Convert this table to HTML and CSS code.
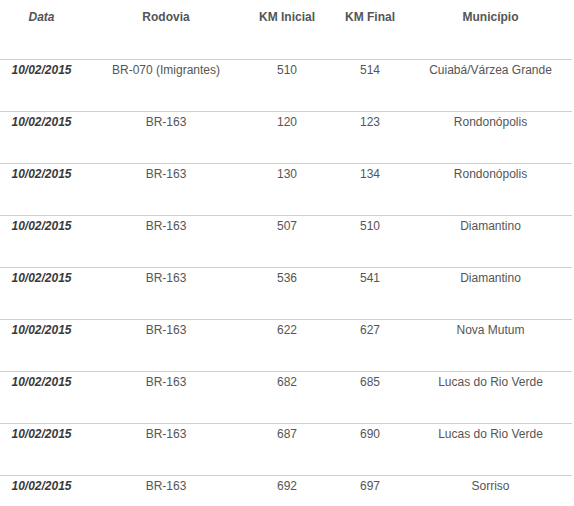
FILE: index.html
```html
<!DOCTYPE html>
<html lang="pt">
<head>
<meta charset="utf-8">
<title>Rodovias</title>
<link rel="stylesheet" href="styles.css">
</head>
<body>
<table class="roads">
  <colgroup>
    <col class="c-data"><col class="c-rod"><col class="c-ini"><col class="c-fin"><col class="c-mun">
  </colgroup>
  <thead>
    <tr>
      <th class="date">Data</th>
      <th>Rodovia</th>
      <th>KM Inicial</th>
      <th>KM Final</th>
      <th class="mun">Município</th>
    </tr>
  </thead>
  <tbody>
    <tr><td class="date">10/02/2015</td><td>BR-070 (Imigrantes)</td><td>510</td><td>514</td><td class="mun">Cuiabá/Várzea Grande</td></tr>
    <tr><td class="date">10/02/2015</td><td>BR-163</td><td>120</td><td>123</td><td class="mun">Rondonópolis</td></tr>
    <tr><td class="date">10/02/2015</td><td>BR-163</td><td>130</td><td>134</td><td class="mun">Rondonópolis</td></tr>
    <tr><td class="date">10/02/2015</td><td>BR-163</td><td>507</td><td>510</td><td class="mun">Diamantino</td></tr>
    <tr><td class="date">10/02/2015</td><td>BR-163</td><td>536</td><td>541</td><td class="mun">Diamantino</td></tr>
    <tr><td class="date">10/02/2015</td><td>BR-163</td><td>622</td><td>627</td><td class="mun">Nova Mutum</td></tr>
    <tr><td class="date">10/02/2015</td><td>BR-163</td><td>682</td><td>685</td><td class="mun">Lucas do Rio Verde</td></tr>
    <tr><td class="date">10/02/2015</td><td>BR-163</td><td>687</td><td>690</td><td class="mun">Lucas do Rio Verde</td></tr>
    <tr><td class="date">10/02/2015</td><td>BR-163</td><td>692</td><td>697</td><td class="mun">Sorriso</td></tr>
  </tbody>
</table>
</body>
</html>
```

FILE: styles.css
```css
html, body {
  margin: 0;
  padding: 0;
  background: #ffffff;
}

body {
  font-family: "Liberation Sans", Arial, sans-serif;
  font-size: 12px;
  line-height: 14px;
  color: #555555;
}

.roads {
  width: 572px;
  table-layout: fixed;
  border-collapse: collapse;
  border-spacing: 0;
}

.c-data { width: 83px; }
.c-rod { width: 166px; }
.c-ini { width: 76px; }
.c-fin { width: 90px; }
.c-mun { width: 157px; }

.roads th,
.roads td {
  padding: 0;
  text-align: center;
  vertical-align: top;
  white-space: nowrap;
}

.roads th {
  height: 49px;
  padding-top: 10px;
  font-weight: bold;
  color: #555555;
}

.roads th.date {
  font-style: italic;
}

.roads td {
  height: 48px;
  padding-top: 3px;
  border-top: 1px solid #cfcfcf;
  color: #555555;
}

.roads td.date {
  font-weight: bold;
  font-style: italic;
  color: #3a3a3a;
}

.roads .mun {
  padding-right: 6px;
}
```
